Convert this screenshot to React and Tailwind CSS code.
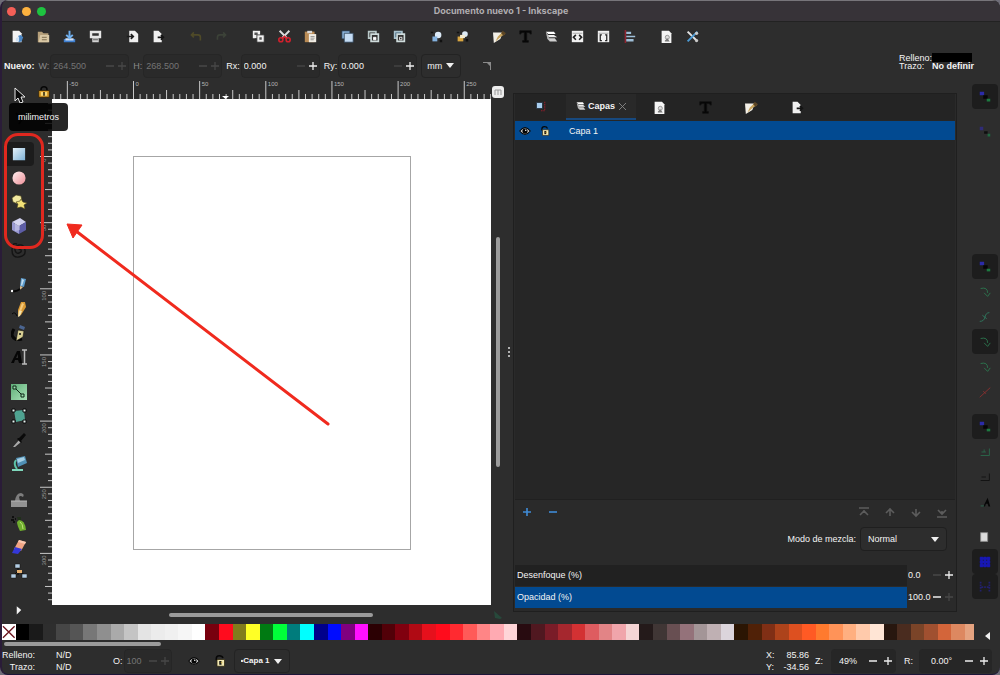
import React, { useEffect, useRef, useState } from "react";

// Icon drawings, all on a 16x16 grid
const icons = {
  newDoc: (
    <>
      <path d="M2 1h8l3 3v11H2z" fill="#f4f4f4" />
      <path d="M9 7l3-1 3 3-2 5-4 1z" fill="#4a86c4" />
      <path d="M6 10l4-2v6H6z" fill="#cfe2f5" />
    </>
  ),
  open: (
    <>
      <path d="M1 2h5l2 2h6v11H1z" fill="#b59f7a" />
      <path d="M4 6h11v9H2z" fill="#d9c8a5" />
      <path d="M6 9h6M6 12h6" stroke="#6b5b3c" />
    </>
  ),
  save: (
    <>
      <path d="M1 11h14v4H1z" fill="#3f7fd0" />
      <path d="M3 10h10v3H3z" fill="#cfdff2" />
      <path d="M8 1v9M4 6l4 4 4-4" stroke="#6fb0f0" strokeWidth="2.4" fill="none" />
    </>
  ),
  print: (
    <>
      <path d="M1 1h14v9H1z" fill="#e8e8e8" />
      <path d="M4 4h8v3H4z" fill="#333" />
      <path d="M4 10h8v5H4z" fill="#d2d2d2" />
      <path d="M5 12h6" stroke="#444" />
    </>
  ),
  importDoc: (
    <>
      <path d="M4 1h7l4 4v10H4z" fill="#f0f0f0" />
      <path d="M1 8h8M6 5l3 3-3 3" stroke="#1c1c1c" strokeWidth="2" fill="none" />
    </>
  ),
  exportDoc: (
    <>
      <path d="M2 1h6l4 4v10H2z" fill="#f0f0f0" />
      <path d="M7 9h7M11 6l3 3-3 3" stroke="#141414" strokeWidth="2" fill="none" />
    </>
  ),
  undo: <path d="M6 3L3 6l3 3M3 6h8q3 0 3 3v4" stroke="#4f4a28" strokeWidth="2" fill="none" />,
  redo: <path d="M10 3l3 3-3 3M13 6H6q-3 0-3 3v3" stroke="#3c4238" strokeWidth="2" fill="none" />,
  copy: (
    <>
      <path d="M1 1h9v9H1z" fill="#f2f2f2" />
      <path d="M6 6h9v9H6z" fill="#f2f2f2" stroke="#333" />
      <path d="M3 3h4v3H3zM9 9h3v3H9z" fill="#555" />
    </>
  ),
  cut: (
    <>
      <path d="M2 1l9 9M14 1l-9 9" stroke="#dedede" strokeWidth="2.4" />
      <circle cx="3.500" cy="12" r="2.500" fill="none" stroke="#d0202c" strokeWidth="2" />
      <circle cx="12.500" cy="12" r="2.500" fill="none" stroke="#d0202c" strokeWidth="2" />
      <path d="M5 11l3-3 3 3" stroke="#d0202c" strokeWidth="2" fill="none" />
    </>
  ),
  paste: (
    <>
      <path d="M1 2h12v13H1z" fill="#b98b55" />
      <path d="M4 1h6v3H4z" fill="#d8d8d8" />
      <path d="M6 5h9v10H6z" fill="#f0ece4" />
      <path d="M8 8h5M8 10h5M8 12h4" stroke="#888" />
    </>
  ),
  duplicate: (
    <>
      <path d="M1 1h10v10H1z" fill="#8bb4dc" stroke="#1c2d40" />
      <path d="M4 4h11v11H4z" fill="#c4dcf4" stroke="#2d4258" />
    </>
  ),
  clone: (
    <>
      <path d="M2 2h9v8H2z" fill="none" stroke="#b9c9c9" strokeWidth="2" />
      <path d="M5 5h9v9H5z" fill="#333" stroke="#cfdcdc" strokeWidth="2" />
      <path d="M8 12V9h3v3z" stroke="#fff" fill="#fff" />
    </>
  ),
  unlink: (
    <>
      <path d="M2 2h9v8H2z" fill="#3a5a70" stroke="#a9c3cf" strokeWidth="2" />
      <path d="M5 5h9v9H5z" fill="#333" stroke="#cfdcdc" strokeWidth="2" />
      <path d="M8 9h3v3H8z" fill="none" stroke="#fff" />
    </>
  ),
  group: (
    <>
      <circle cx="10" cy="6" r="4" fill="#dceaf7" />
      <path d="M3 8h6v6H3z" fill="#84b2df" />
      <path d="M1 2h3v2H1zM12 12h3v3h-3z" fill="#101010" />
    </>
  ),
  ungroup: (
    <>
      <circle cx="11" cy="5" r="3.500" fill="#dceaf7" />
      <path d="M2 8h7v6H2z" fill="#d9a640" />
      <path d="M5 6h6v4H5z" fill="#f5ecd0" />
      <path d="M1 2h3v2H1zM12 11h3v3h-3z" fill="#101010" />
    </>
  ),
  fill: (
    <>
      <path d="M0 3h12l-3 8-8 5z" fill="#f3f0e8" />
      <path d="M6 8l6-6 3 3-5 3-7 6z" fill="#c7a35c" />
      <path d="M12 1l4 3-3 3-3-3z" fill="#5c4524" />
    </>
  ),
  text: <path d="M1 1h14v4h-1q0-2-3-2H9.500v10h2v2h-7v-2h2V3H5Q2 3 2 5H1z" fill="#050505" stroke="#111" />,
  layers: (
    <>
      <path d="M1 2h10l2 3H4z" fill="#fff" />
      <path d="M2 6h9l4 3H5z" fill="#ececec" />
      <path d="M3 10h9l3 4H6z" fill="#cfcfcf" />
      <path d="M1 2l3 4 2 8-3-3z" fill="#b9b9b9" />
    </>
  ),
  xml: (
    <>
      <path d="M1 1h14v14H1z" fill="#f1f1f1" />
      <path d="M2 4h12" stroke="#999" />
      <path d="M6 6L3 9l3 3M10 6l3 3-3 3" stroke="#222" strokeWidth="2" fill="none" />
    </>
  ),
  selectors: (
    <>
      <path d="M1 1h14v14H1z" fill="#f1f1f1" />
      <path d="M2 4h12" stroke="#999" />
      <path d="M6 6H4v7h2M10 6h2v7h-2" stroke="#222" strokeWidth="1.500" fill="none" />
    </>
  ),
  align: (
    <>
      <path d="M3 0v16" stroke="#8f2430" strokeWidth="2" />
      <path d="M4 2h6v3H4zM4 7h11v2H4zM4 11h9v3H4z" fill="#9fbfd8" />
    </>
  ),
  docProps: (
    <>
      <path d="M2 1h9l3 3v12H2z" fill="#f5f5f5" />
      <circle cx="9" cy="9" r="2.500" fill="#ddd" stroke="#888" />
      <path d="M6 13l3-3 3 4H6z" fill="#777" />
    </>
  ),
  prefs: (
    <>
      <path d="M2 2l11 11" stroke="#e4e4e4" strokeWidth="2.400" />
      <path d="M14 2L2 14" stroke="#4c9ad4" strokeWidth="2.400" />
      <circle cx="13" cy="4" r="2" fill="#c8c8c8" />
      <circle cx="13" cy="13" r="2" fill="#c8c8c8" />
    </>
  ),
  objects: (
    <>
      <path d="M2 2h8v8H2z" fill="#a8cdee" stroke="#1c2733" />
      <path d="M13 1v12H7" stroke="#8d1e2b" strokeWidth="1.500" strokeDasharray="2 1" fill="none" />
    </>
  ),
  lock: (
    <>
      <path d="M4 7V5q0-4 4-4t4 4v2" stroke="#070707" strokeWidth="2" fill="none" />
      <path d="M1 6h14v9H1z" fill="#d79a28" stroke="#2b1d03" />
      <path d="M4 8h8v5H4z" fill="#f7d674" />
      <path d="M7 8h2v5H7z" fill="#221a08" />
    </>
  ),
  unlock: (
    <>
      <path d="M3 7V5q0-4 4-4t5 3" stroke="#070707" strokeWidth="2" fill="none" />
      <path d="M4 6h10v9H4z" fill="#f3e9b4" stroke="#2b240c" />
      <path d="M7 8h3v5H7z" fill="#141414" />
      <path d="M9 9h2v2H9z" fill="#c2a644" />
    </>
  ),
  eye: (
    <>
      <path d="M1 8q7-9 14 0-7 9-14 0z" fill="#d8d8d8" stroke="#050505" strokeWidth="1.500" />
      <circle cx="8" cy="8" r="3.500" fill="#050505" />
      <circle cx="9" cy="7" r="1" fill="#fff" />
    </>
  ),
  // toolbox
  pointer: <path d="M4 1v13l3-3 2 5 3-1-2-5h4z" fill="#0b0b0b" stroke="#e9e9e9" />,
  nodes: <path d="M5 2l6 6-3 5" fill="none" stroke="#0b0b0b" strokeWidth="2" />,
  rect: <path d="M1 1h14v14H1z" fill="url(#gBlue)" />,
  ellipse: <circle cx="8" cy="8" r="7.500" fill="url(#gPink)" />,
  star: (
    <>
      <path d="M5 1l5 1 1 5-4 3-5-2-1-4z" fill="#f2e9a0" stroke="#4b431c" strokeWidth=".6" />
      <path d="M10 5l2 3 4 1-3 2 1 4-4-2-4 1 1-4-2-2 4-1z" fill="#f3e278" stroke="#4b431c" strokeWidth=".6" />
    </>
  ),
  cube: (
    <>
      <path d="M1 4l8-4 6 4-7 4z" fill="#cfcfee" />
      <path d="M1 4l7 4v8l-7-4z" fill="#9a9ad2" />
      <path d="M15 4l-7 4v8l7-4z" fill="#5d5da6" />
      <path d="M4 3l5-2v11l-5 1z" fill="#e4e4f8" opacity=".4" />
    </>
  ),
  spiral: (
    <path
      d="M8 8q1-2 2 0t-2 3-4-3 4-5 6 5-6 7-7-7 5-6"
      fill="none"
      stroke="#141414"
      strokeWidth="1.400"
    />
  ),
  pen: (
    <>
      <path d="M10 1l5 1-2 8-4-1z" fill="#5d9ccc" />
      <path d="M11 2l2 1-2 6-1-1z" fill="#c4def0" />
      <path d="M9 9l3 1-3 3z" fill="#d8b98a" />
      <path d="M9 12q-4 3-7 2" stroke="#080808" strokeWidth="2" fill="none" />
      <circle cx="1" cy="14" r="1.200" fill="#fff" />
    </>
  ),
  pencil: (
    <>
      <path d="M10 1h4l1 5-5 8-3 1V9z" fill="#d99a35" />
      <path d="M8 9l3 1-2 5-2 1z" fill="#f3e3b0" />
      <path d="M11 2l2 1-3 7H8z" fill="#f5c97a" />
      <path d="M1 13q3-3 5 2" stroke="#080808" fill="none" />
    </>
  ),
  calligraphy: (
    <>
      <path d="M3 4Q-2 12 6 15l5-1" stroke="#070707" strokeWidth="3" fill="none" />
      <path d="M9 0l5 2-1 3-5-2z" fill="#4b6590" />
      <path d="M7 5l6 1-1 6-7 4z" fill="#d8cf94" stroke="#111" strokeWidth=".6" />
      <circle cx="9" cy="9" r="1" fill="#111" />
    </>
  ),
  textTool: (
    <>
      <path d="M0 14L6 2h3l2 12H8l-1-3H4l-1 3zM5 9h2V5z" fill="#060606" />
      <path d="M11 1h5M11 15h5M13.500 1v14" stroke="#bcbcbc" strokeWidth="1.500" />
    </>
  ),
  gradient: (
    <>
      <path d="M0 0h16v16H0z" fill="url(#gGreen)" />
      <path d="M4 4l8 8" stroke="#0d2616" />
      <path d="M2 2h3v3H2zM10 10h3v3h-3z" fill="#9fe0b0" stroke="#0d2616" />
    </>
  ),
  mesh: (
    <>
      <path d="M3 3l10-1 1 10-9 2z" fill="#4fa391" />
      <path d="M1 1h3v3H1zM12 1h3v3h-3zM1 12h3v3H1zM12 12h3v3h-3z" fill="#e8f4f1" stroke="#0a0a0a" />
    </>
  ),
  dropper: (
    <>
      <path d="M2 15l6-7 2 2-6 5z" fill="#aaa" />
      <path d="M8 6l5-5 2 2-5 6 1 1-1 1-4-4 1-1z" fill="#0a0a0a" />
    </>
  ),
  bucket: (
    <>
      <path d="M5 2l9-2 2 7-9 4z" fill="#4f8fb4" />
      <path d="M6 3l7-2 1 3-7 3z" fill="#a5cfe4" />
      <path d="M5 4q-3 4 1 9" stroke="#5cc4a8" strokeWidth="2" fill="none" />
      <path d="M1 13h11v2H1z" fill="#7fd8bc" />
    </>
  ),
  tweak: (
    <>
      <path d="M0 10h16v6H0z" fill="#929292" />
      <path d="M4 10q1-8 6-8 4 1 2 4-3-2-4 0l1 4z" fill="#7d7d7d" />
      <path d="M0 10h16" stroke="#b5b5b5" />
    </>
  ),
  spray: (
    <>
      <path d="M8 5q6 0 7 10l-6 1q-3-6-3-9z" fill="#6fae2e" />
      <path d="M9 7q3 2 3 7" stroke="#bce478" fill="none" />
      <path d="M6 2h4v3H7z" fill="#20301a" />
      <path d="M1 2h2M0 5h3M2 7h2M4 4h1" stroke="#060606" strokeWidth="1.500" />
    </>
  ),
  eraser: (
    <>
      <path d="M8 1l7 2-5 9-7-2z" fill="#f0a484" />
      <path d="M4 8l7 2-4 5-6-1z" fill="#3438d8" />
      <path d="M8 1l7 2-1 2-7-2z" fill="#f8c8b0" />
    </>
  ),
  connector: (
    <>
      <path d="M7 4v8M7 8L3 12M7 8l7 4" stroke="#080808" />
      <path d="M4 1h5v4H4zM0 11h5v4H0zM11 11h5v4h-5z" fill="#b3cde4" stroke="#111" strokeWidth=".5" />
      <path d="M6 7h5v3H6z" fill="#e6b070" />
    </>
  ),
  expander: <path d="M5 3l6 5-6 6z" fill="#f2f2f2" />,
  // snap bar
  snap: (
    <>
      <path d="M2 2h5v4H2z" fill="#2b2ba8" />
      <path d="M6 6h5v4H6z" fill="#060606" />
      <path d="M10 10h4v3h-4z" fill="#1d7a40" />
    </>
  ),
  snapDim: (
    <>
      <path d="M2 2h4v4H2z" fill="#302c78" />
      <path d="M7 7h4v3H7z" fill="#0e0e0e" />
      <path d="M11 10h3v3h-3z" fill="#1f6a40" />
    </>
  ),
  snapCurve: <path d="M3 4q8-2 8 5M7 9l4 4 3-4" fill="none" stroke="#2c7a50" />,
  snapPath: <path d="M2 13q5 0 6-5t5-5M5 6l5 4" fill="none" stroke="#2f7a60" />,
  snapLine: <path d="M2 14L14 3M6 7l3 3" fill="none" stroke="#8f2f2f" />,
  snapBox: <path d="M3 12h10V4M4 8h5M7 5v3" fill="none" stroke="#2a6a4c" />,
  snapGrey: <path d="M3 12h10V4M4 8h5" fill="none" stroke="#101010" />,
  snapText: (
    <>
      <path d="M6 13l5-10 3 10h-2l-1-3H9l-1 3z" fill="#060606" />
      <path d="M3 12h4v1H3z" fill="#2b6b50" />
    </>
  ),
  snapPage: <path d="M3 3h8v10H3z" fill="#dcdcdc" stroke="#888" />,
  snapGrid: <path d="M2 4h12M2 8h12M2 12h12M4 2v12M8 2v12M12 2v12" stroke="#1717b4" strokeWidth="3" />,
  snapGuide: <path d="M3 2v12M13 2v12M4 8h8" stroke="#22206a" strokeWidth="2" strokeDasharray="2 1" />,
  none: null,
};

function Icon({ name, className = "size-3" }) {
  return (
    <svg viewBox="0 0 16 16" className={`${className} shrink-0`} aria-hidden="true">
      {icons[name]}
    </svg>
  );
}

const commandGroups = [
  ["newDoc", "open", "save", "print"],
  ["importDoc", "exportDoc"],
  ["undo", "redo"],
  ["copy", "cut", "paste"],
  ["duplicate", "clone", "unlink"],
  ["group", "ungroup"],
  ["fill", "text", "layers", "xml", "selectors", "align"],
  ["docProps", "prefs"],
];

const toolGroups = [
  ["pointer", "nodes"],
  ["rect", "ellipse", "star", "cube", "spiral"],
  ["pen", "pencil", "calligraphy", "textTool"],
  ["gradient", "mesh", "dropper", "bucket"],
  ["tweak", "spray", "eraser", "connector"],
];

// [icon, pressed]
const snapGroups = [
  [["snap", true]],
  [["snapDim"], ["none"], ["none"], ["none"], ["none"]],
  [["snap", true], ["snapCurve"], ["snapPath"], ["snapCurve", true], ["snapCurve"], ["snapLine"]],
  [["snap", true], ["snapBox"], ["snapGrey"], ["snapText"]],
  [["snapPage"], ["snapGrid", true], ["snapGuide", true]],
];

const palette = [
  "#000000", "#1a1a1a", "#2e2e2e", "#464646", "#555555", "#777777", "#8f8f8f", "#aaaaaa", "#c4c4c4",
  "#e4e4e4", "#ececec", "#f0f0f0", "#f6f6f6", "#ffffff",
  "#78000e", "#ff0c1e", "#827c1c", "#ffff26", "#007a12", "#00ff3a", "#007c7c", "#00ffff",
  "#00008b", "#000cff", "#800080", "#ff10ff",
  "#2b0003", "#520008", "#80000f", "#b00a14", "#e6101c", "#ff0c1c", "#ff2a30", "#ff5a58", "#ff8586", "#ffaab2", "#ffd5d8",
  "#280b10", "#501820", "#7a1c28", "#a5272e", "#d33133", "#de5c60", "#e28486", "#f0a5ab", "#f5d5d5",
  "#241a1a", "#403635", "#684f52", "#94727a", "#a39597", "#bfb0b3", "#dcd5dc",
  "#2b1503", "#502107", "#802f15", "#ad431b", "#dd5020", "#ff5a24", "#ff7a2e", "#ff9358", "#ffaf80", "#ffcaab", "#ffe5d5",
  "#28170f", "#4a2c1f", "#7a4428", "#a05030", "#d3653a", "#dd8860", "#e5a380",
];

// 5 mm on the ruler, in screen pixels
const STEP = 6.615;

function tickLength(i, sizes) {
  if (i % 10 === 0) return sizes[0];
  if (i % 5 === 0) return sizes[1];
  return sizes[2];
}

// Tick numbers that fit in the ruler's current length
function useTicks(axis, origin) {
  const ref = useRef(null);
  const [length, setLength] = useState(0);

  useEffect(() => {
    const observer = new ResizeObserver(([entry]) => setLength(entry.contentRect[axis]));
    observer.observe(ref.current);
    return () => observer.disconnect();
  }, [axis]);

  const first = Math.ceil(-origin / STEP);
  const last = Math.floor((length - origin) / STEP);
  const ticks = [];
  for (let i = first; i <= last; i++) ticks.push(i);
  return [ref, ticks];
}

function HorizontalRuler() {
  const [ref, ticks] = useTicks("width", 81);
  return (
    <div ref={ref} className="min-w-0">
      <svg className="block h-full w-full" aria-hidden="true">
        {ticks.map((i) => {
          const x = 81.5 + i * STEP;
          return (
            <g key={i}>
              <path d={`M${x} 19v-${tickLength(i, [18, 9, 5])}`} stroke="#c9c9c9" />
              {i % 10 === 0 && (
                <text x={x + 2} y="6" fontSize="6" fill="#b5b5b5">
                  {i * 5}
                </text>
              )}
            </g>
          );
        })}
        <path d="M170 16h7l-3.500 3z" fill="#fff" />
      </svg>
    </div>
  );
}

function VerticalRuler() {
  const [ref, ticks] = useTicks("height", 57);
  return (
    <div ref={ref} className="min-h-0">
      <svg className="block h-full w-full" aria-hidden="true">
        {ticks.map((i) => {
          const y = 57.5 + i * STEP;
          return (
            <g key={i}>
              <path d={`M16 ${y}h-${tickLength(i, [12, 7, 4])}`} stroke="#c9c9c9" />
              {i % 10 === 0 && (
                <text transform={`translate(10 ${y + 2}) rotate(-90)`} textAnchor="end" fontSize="6" fill="#9a9a9a">
                  {i * 5}
                </text>
              )}
            </g>
          );
        })}
      </svg>
    </div>
  );
}

function Caret() {
  return (
    <svg viewBox="0 0 8 5" className="pointer-events-none h-[5px] w-2 shrink-0" aria-hidden="true">
      <path d="M0 0h8L4 5z" fill="#f0f0f0" />
    </svg>
  );
}

function StepButton({ sign, off }) {
  return (
    <button
      aria-label={sign === "+" ? "Aumentar" : "Disminuir"}
      disabled={off}
      className={`flex w-3 shrink-0 items-center justify-center ${off ? "text-[#484848]" : "text-[#eeeeee]"}`}
    >
      <svg viewBox="0 0 8 8" className="size-2" aria-hidden="true">
        <path d={sign === "+" ? "M0 4h8M4 0v8" : "M0 4h8"} stroke="currentColor" strokeWidth="1.300" />
      </svg>
    </button>
  );
}

function Spin({ id, label, value, box, off, dimLabel, minusOff }) {
  const [val, setVal] = useState(value);
  return (
    <div className="flex items-center gap-px">
      <label htmlFor={id} className={dimLabel ? "text-[#8a8a8a]" : ""}>
        {label}
      </label>
      <div className={`flex h-6 items-center rounded border border-[#262626] bg-[#2a2a2a] pl-[2px] ${box}`}>
        <input
          id={id}
          value={val}
          disabled={off}
          onChange={(e) => setVal(e.target.value)}
          className={`w-0 min-w-0 flex-1 bg-transparent outline-none ${off ? "text-[#757575]" : ""}`}
        />
        <StepButton sign="-" off={off || minusOff} />
        <StepButton sign="+" off={off} />
      </div>
    </div>
  );
}

function SliderRow({ id, label, value, full }) {
  const [val, setVal] = useState(value);
  return (
    <div className="flex h-[22px] items-center">
      <label
        htmlFor={id}
        className={`flex h-[21px] flex-1 items-center pl-[2px] ${full ? "bg-[#024a91]" : "bg-[#212121]"}`}
      >
        {label}
      </label>
      <input
        id={id}
        value={val}
        onChange={(e) => setVal(e.target.value)}
        className="w-6 min-w-0 bg-transparent pl-px outline-none"
      />
      <StepButton sign="-" off={!full} />
      <StepButton sign="+" off={full} />
    </div>
  );
}

function Toolbox() {
  return (
    <aside className="relative flex w-[34px] shrink-0 flex-col items-center gap-[11px] pt-[3px]">
      {toolGroups.map((group) => (
        <div key={group[0]} className="flex flex-col">
          {group.map((name) => (
            <button
              key={name}
              aria-label={name}
              className={`flex h-6 w-[30px] items-center justify-center rounded ${name === "rect" ? "bg-[#1c1c1c]" : ""}`}
            >
              <Icon name={name} className={name === "rect" || name === "ellipse" ? "size-[14px]" : "size-4"} />
            </button>
          ))}
        </div>
      ))}
      <button aria-label="Más herramientas" className="mt-1 flex h-6 items-center">
        <Icon name="expander" />
      </button>

      {/* Marked group of shape tools */}
      <div className="pointer-events-none absolute top-[53px] left-[2px] z-10 h-[116px] w-[40px] rounded-[14px] border-3 border-[#e0281f]" />
      {/* Tooltip */}
      <div
        role="tooltip"
        className="absolute top-[23px] left-[7px] z-20 flex h-7 w-[59px] items-center justify-center rounded bg-black/85"
      >
        milimetros
      </div>
    </aside>
  );
}

function CanvasArea() {
  return (
    <section className="grid min-w-0 flex-1 grid-cols-[16px_minmax(0,1fr)_14px] grid-rows-[19px_minmax(0,1fr)_19px]">
      <button aria-label="Bloquear guías" className="flex items-center justify-center pt-1">
        <Icon name="lock" />
      </button>
      <HorizontalRuler />
      <button aria-label="Ajustar" className="flex items-center justify-center pt-1">
        <svg viewBox="0 0 12 12" className="size-3" aria-hidden="true">
          <rect width="12" height="12" rx="3" fill="#ededed" />
          <path d="M3 9V4h6v5M6 4v5" stroke="#999" fill="none" />
        </svg>
      </button>

      <VerticalRuler />
      <div className="relative overflow-hidden bg-white">
        <div className="absolute top-[57px] left-[81px] h-[394px] w-[278px] border border-[#a6a6a6]" />
        <svg className="absolute top-0 left-0 h-full w-full" aria-hidden="true">
          <path d="M24 132L276 325" stroke="#f02a1e" strokeWidth="3" strokeLinecap="round" />
          <path d="M15 125l15 1-9 13z" fill="#f02a1e" stroke="#f02a1e" />
        </svg>
      </div>
      <div className="flex justify-center pt-[138px]">
        <div className="h-[230px] w-1 rounded-full bg-[#9b9b9b]" />
      </div>

      <div />
      <div className="flex items-center pl-[117px]">
        <div className="h-1 w-[204px] rounded-full bg-[#9b9b9b]" />
      </div>
      <div className="flex items-center justify-center">
        <svg viewBox="0 0 10 10" className="size-[10px]" aria-hidden="true">
          <path d="M1 1l8 7-2 1-5-1z" fill="#27493b" />
        </svg>
      </div>
    </section>
  );
}

function LayersPanel() {
  return (
    <section className="mt-[13px] mb-3 flex w-[444px] shrink-0 flex-col border border-[#1f1f1f] bg-[#2a2a2a] px-px">
      <div className="flex h-[26px] bg-[#242424]">
        <button aria-label="Objetos" className="flex w-[51px] items-center justify-center">
          <Icon name="objects" />
        </button>
        <button className="flex w-[70px] items-center justify-center border-b-2 border-[#17497f] bg-[#292929] font-bold">
          <Icon name="layers" className="mr-[2px] size-[10px]" />
          Capas
          <svg viewBox="0 0 8 8" className="ml-1 size-[7px]" aria-hidden="true">
            <path d="M0 0l8 8M8 0L0 8" stroke="#8a8a8a" />
          </svg>
        </button>
        {["docProps", "text", "fill", "exportDoc"].map((name) => (
          <button key={name} aria-label={name} className="flex w-[46px] items-center justify-center">
            <Icon name={name} className="size-[13px]" />
          </button>
        ))}
      </div>

      <div className="flex-1 bg-[#262626] pt-px">
        <div className="flex h-[19px] items-center bg-[#024a91]">
          <button aria-label="Visibilidad" className="flex w-5 items-center justify-center">
            <Icon name="eye" />
          </button>
          <button aria-label="Bloqueo" className="flex w-5 items-center justify-center">
            <Icon name="unlock" className="size-[10px]" />
          </button>
          <span className="pl-[14px]">Capa 1</span>
        </div>
      </div>

      <div className="flex h-6 items-center justify-between border-t border-[#202020] pr-[7px] pl-2">
        <div className="flex gap-[18px] text-[#3f8bd6]">
          <button aria-label="Añadir capa">
            <svg viewBox="0 0 8 8" className="size-2" aria-hidden="true">
              <path d="M0 4h8M4 0v8" stroke="currentColor" strokeWidth="1.600" />
            </svg>
          </button>
          <button aria-label="Quitar capa">
            <svg viewBox="0 0 8 8" className="size-2" aria-hidden="true">
              <path d="M0 4h8" stroke="currentColor" strokeWidth="1.600" />
            </svg>
          </button>
        </div>
        <div className="flex gap-[14px]">
          {[
            "M1 2h10M2 9l4-4 4 4M6 4v3",
            "M2 7l4-4 4 4M6 3v7",
            "M2 6l4 4 4-4M6 10V3",
            "M1 11h10M2 4l4 4 4-4M6 8V5",
          ].map((d) => (
            <button key={d} aria-label="Mover capa">
              <svg viewBox="0 0 12 12" className="size-3" aria-hidden="true">
                <path d={d} stroke="#5c5c5c" strokeWidth="1.600" fill="none" />
              </svg>
            </button>
          ))}
        </div>
      </div>

      <div className="flex h-8 items-center justify-end gap-1 pr-2">
        <label htmlFor="blend">Modo de mezcla:</label>
        <div className="relative flex items-center">
          <select
            id="blend"
            className="h-6 w-[87px] appearance-none rounded border border-[#1f1f1f] bg-[#2d2d2d] pl-[7px]"
          >
            <option>Normal</option>
          </select>
          <span className="pointer-events-none absolute right-2">
            <Caret />
          </span>
        </div>
      </div>

      <div className="pt-[9px] pb-[3px]">
        <SliderRow id="blur" label="Desenfoque (%)" value="0.0" />
        <SliderRow id="opacity" label="Opacidad (%)" value="100.0" full />
      </div>
    </section>
  );
}

function SnapBar() {
  return (
    <aside className="flex w-[43px] shrink-0 flex-col gap-[10px] pt-1 pl-[15px]">
      {snapGroups.map((group, g) => (
        <div key={g} className="flex flex-col">
          {group.map(([name, pressed], i) => (
            <button
              key={i}
              aria-label={`Ajuste ${g + 1}.${i + 1}`}
              className={`flex h-[25px] w-[26px] items-center justify-center rounded ${pressed ? "bg-[#1d1d1d]" : ""}`}
            >
              <Icon name={name} className="size-[14px]" />
            </button>
          ))}
        </div>
      ))}
    </aside>
  );
}

export default function App() {
  return (
    <div className="h-screen overflow-hidden bg-[#6f6d78]">
      <svg className="absolute size-0" aria-hidden="true">
        <defs>
          <linearGradient id="gBlue" x1="0" y1="0" x2="1" y2="1">
            <stop offset="0" stopColor="#e6f2fa" />
            <stop offset="1" stopColor="#7fb2d6" />
          </linearGradient>
          <linearGradient id="gPink" x1="0" y1="0" x2="1" y2="1">
            <stop offset="0" stopColor="#fff0f0" />
            <stop offset="1" stopColor="#ee8f98" />
          </linearGradient>
          <linearGradient id="gGreen" x1="0" y1="0" x2="1" y2="1">
            <stop offset="0" stopColor="#5fae78" />
            <stop offset="1" stopColor="#a9e2b8" />
          </linearGradient>
        </defs>
      </svg>

      <div className="flex h-full flex-col overflow-hidden rounded-lg border-b border-l-2 border-b-[#1d1538] border-l-[#2a1c38] bg-[#2d2d2d] font-['Liberation_Sans',Arial,sans-serif] text-[9px] leading-3 text-[#f4f4f4]">
        {/* Title bar */}
        <header className="relative flex h-[22px] shrink-0 items-center justify-center border-t border-b border-t-[#77757a] border-b-[#222222] bg-[#373338]">
          <div className="absolute left-[5px] flex gap-[6px]">
            <button aria-label="Cerrar" className="size-[9px] rounded-full bg-[#f55f57]" />
            <button aria-label="Minimizar" className="size-[9px] rounded-full bg-[#fdb13f]" />
            <button aria-label="Maximizar" className="size-[9px] rounded-full bg-[#1ec340]" />
          </div>
          <h1 className="font-[Inter,sans-serif] text-[9px] font-bold text-[#b0adb1]">
            Documento nuevo 1 - Inkscape
          </h1>
        </header>

        {/* Commands */}
        <nav className="flex h-[29px] shrink-0 items-center gap-[11px] pl-[2px]">
          {commandGroups.map((group) => (
            <div key={group[0]} className="flex">
              {group.map((name) => (
                <button key={name} aria-label={name} className="flex h-6 w-[26px] items-center justify-center">
                  <Icon name={name} className="size-[13px]" />
                </button>
              ))}
            </div>
          ))}
        </nav>

        {/* Tool options */}
        <div className="flex h-[29px] shrink-0 items-center gap-1 pr-7 pl-[2px]">
          <span className="font-bold">Nuevo:</span>
          <Spin id="w" label="W:" value="264.500" box="w-[79px]" off dimLabel />
          <Spin id="h" label="H:" value="268.500" box="w-[79px]" off dimLabel />
          <Spin id="rx" label="Rx:" value="0.000" box="w-[79px]" minusOff />
          <Spin id="ry" label="Ry:" value="0.000" box="w-[79px]" minusOff />
          <div className="relative flex items-center">
            <select
              aria-label="Unidades"
              className="h-6 w-10 appearance-none rounded border border-[#232323] bg-[#2d2d2d] pl-[5px]"
            >
              <option>mm</option>
            </select>
            <span className="pointer-events-none absolute right-[7px]">
              <Caret />
            </span>
          </div>
          <button aria-label="Esquinas rectas" className="ml-[18px]">
            <svg viewBox="0 0 8 8" className="size-2" aria-hidden="true">
              <path d="M0 0h8v8H7V4L4 1H0z" fill="#8a8a8a" />
            </svg>
          </button>
          <div className="ml-auto grid grid-cols-[33px_40px] items-center self-start pt-[2px] leading-[8px]">
            <span>Relleno:</span>
            <span className="h-[9px] bg-black" />
            <span>Trazo:</span>
            <span className="font-bold whitespace-nowrap">No definir</span>
          </div>
        </div>

        {/* Work area */}
        <main className="flex min-h-0 flex-1">
          <Toolbox />
          <CanvasArea />
          <div className="flex w-2 shrink-0 flex-col items-center justify-center gap-[2px]">
            <span className="size-[2px] rounded-full bg-[#dddddd]" />
            <span className="size-[2px] rounded-full bg-[#dddddd]" />
            <span className="size-[2px] rounded-full bg-[#dddddd]" />
          </div>
          <LayersPanel />
          <SnapBar />
        </main>

        {/* Palette */}
        <div className="flex h-4 shrink-0 items-center">
          <div className="flex h-4 flex-1">
            <button aria-label="Ninguno" className="min-w-0 flex-[3] bg-white">
              <svg viewBox="0 0 14 16" className="h-4 w-full" aria-hidden="true">
                <path d="M1 2l12 12M13 2L1 14" stroke="#6d1620" strokeWidth="1.400" />
              </svg>
            </button>
            {palette.map((color, i) => (
              <button
                key={color + i}
                aria-label={color}
                className="min-w-0 flex-[3] last:flex-[2]"
                style={{ backgroundColor: color }}
              />
            ))}
          </div>
          <button aria-label="Menú de paleta" className="flex w-[26px] justify-center pt-2">
            <svg viewBox="0 0 5 8" className="h-2 w-[5px]" aria-hidden="true">
              <path d="M5 0v8L0 4z" fill="#f0f0f0" />
            </svg>
          </button>
        </div>
        <div className="h-2 shrink-0 pt-[2px] pl-[2px]">
          <div className="h-1 w-[157px] rounded-full bg-[#9b9b9b]" />
        </div>

        {/* Status bar */}
        <footer className="flex h-[26px] shrink-0 items-center">
          <div className="grid w-[111px] grid-cols-[33px_1fr] gap-x-[21px]">
            <span className="text-right">Relleno:</span>
            <span>N/D</span>
            <span className="text-right">Trazo:</span>
            <span>N/D</span>
          </div>
          <Spin id="o" label="O:" value="100" box="w-12" minusOff off />
          <button aria-label="Visibilidad de capa" className="ml-4">
            <Icon name="eye" />
          </button>
          <button aria-label="Bloqueo de capa" className="ml-[14px]">
            <Icon name="unlock" />
          </button>
          <div className="relative ml-2 flex items-center">
            <select
              aria-label="Capa"
              className="h-6 w-14 appearance-none rounded border border-[#232323] bg-[#2d2d2d] pl-[6px] text-[8px] font-bold"
            >
              <option>•Capa 1</option>
            </select>
            <span className="pointer-events-none absolute right-2">
              <Caret />
            </span>
          </div>

          <div className="ml-auto grid grid-cols-[13px_30px] pr-[6px]">
            <span>X:</span>
            <span className="text-right">85.86</span>
            <span>Y:</span>
            <span className="text-right">-34.56</span>
          </div>
          <div className="flex gap-2 pr-2">
            <div className="flex items-center gap-2">
              <label htmlFor="zoom">Z:</label>
              <div className="flex h-6 w-[65px] items-center rounded bg-[#262626] pr-[2px] pl-2">
                <input id="zoom" defaultValue="49%" className="w-0 min-w-0 flex-1 bg-transparent outline-none" />
                <div className="flex gap-[3px]">
                  <StepButton sign="-" />
                  <StepButton sign="+" />
                </div>
              </div>
            </div>
            <div className="flex items-center gap-[6px]">
              <label htmlFor="rotation">R:</label>
              <div className="flex h-6 w-[73px] items-center rounded bg-[#262626] pr-[2px] pl-3">
                <input id="rotation" defaultValue="0.00°" className="w-0 min-w-0 flex-1 bg-transparent outline-none" />
                <div className="flex gap-[3px]">
                  <StepButton sign="-" />
                  <StepButton sign="+" />
                </div>
              </div>
            </div>
          </div>
        </footer>
      </div>
    </div>
  );
}
